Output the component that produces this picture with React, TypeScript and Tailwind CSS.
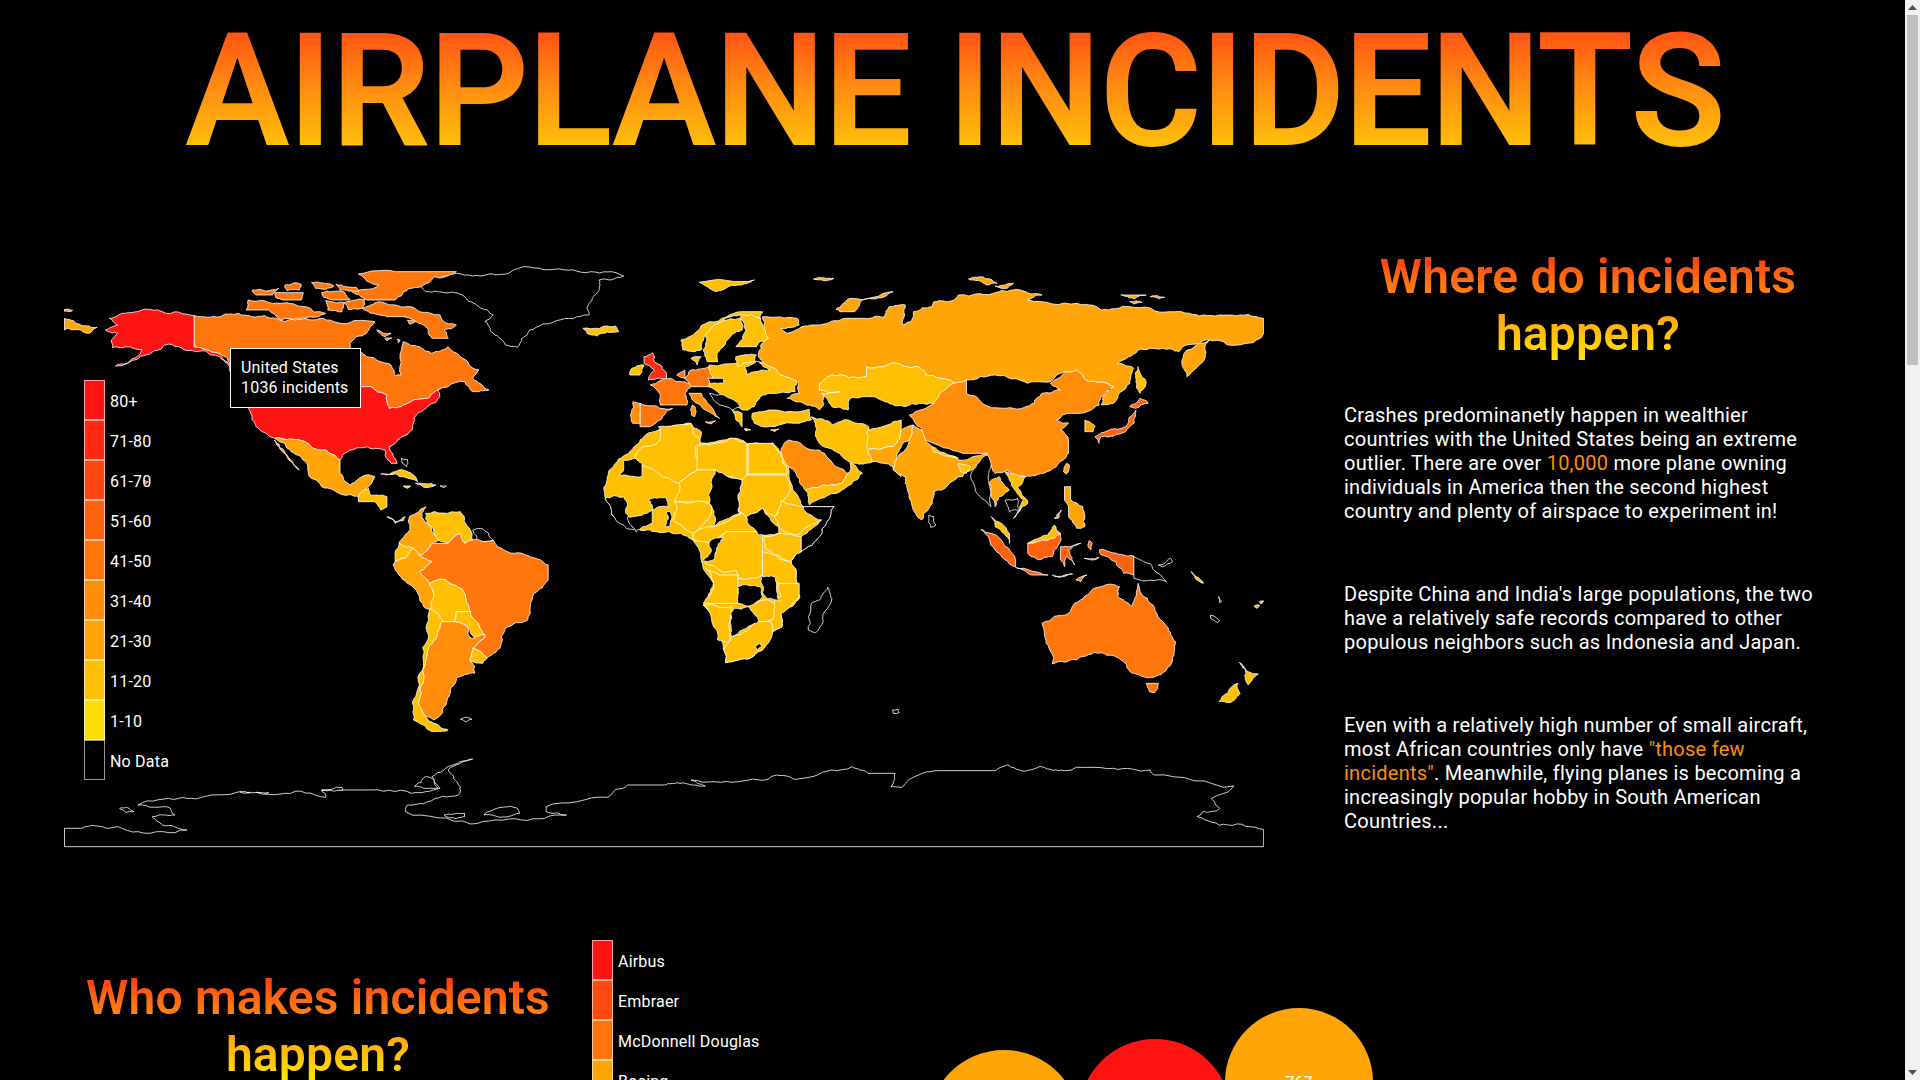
// Airplane incidents dashboard: title, world map with legend, text column, makers section

import React from 'react';

interface Shape {
  c: string;
  d: string;
}

const C80 = '#ff1414';
const C70 = '#ff2a12';
const C60 = '#ff4510';
const C50 = '#ff610e';
const C40 = '#ff770c';
const C30 = '#ff8d0a';
const C20 = '#ffa508';
const C10 = '#ffc004';
const NONE = '#000000';

// traced with x scaled 2.45 and y scaled 3, origin 40,250
const westShapes: Shape[] = [
  { c: C80, d: '170,205 200,190 250,180 300,185 378,197 378,290 400,297 440,310 470,345 470,370 440,320 400,302 340,290 305,285 290,300 260,315 215,340 185,348 240,318 250,300 210,290 178,293 175,270 190,250 160,240 190,225' },
  { c: C20, d: '60,205 100,225 140,232 120,250 100,240 70,235 60,240' },
  { c: C20, d: '60,178 80,181 70,185 60,184' },
  { c: C40, d: '378,197 440,200 485,190 520,200 580,205 600,215 650,205 720,215 800,212 820,215 800,250 760,280 760,295 800,320 860,345 870,378 885,375 890,275 930,290 960,310 1000,290 1030,320 1075,360 1060,385 1100,420 1060,425 1040,395 1000,410 975,420 950,445 890,465 855,475 850,435 810,410 480,410 465,340 440,310 400,297 378,290' },
  { c: C40, d: '790,175 830,155 870,165 930,185 980,195 985,210 1020,225 990,240 1000,265 960,265 940,225 890,200 850,200 810,190' },
  { c: C40, d: '780,72 870,65 1020,65 950,100 890,125 870,150 800,150 760,120 830,105' },
  { c: C40, d: '510,150 590,160 650,170 700,190 650,205 590,210 560,180 505,180' },
  { c: C40, d: '520,120 585,115 570,135 530,135' },
  { c: C40, d: '600,105 640,103 635,120 605,122' },
  { c: C40, d: '665,98 720,108 700,118 675,115' },
  { c: C40, d: '690,128 745,125 760,150 720,150 695,142' },
  { c: C40, d: '725,103 775,112 780,125 735,122' },
  { c: C40, d: '575,128 645,128 640,150 600,150 580,145' },
  { c: C40, d: '700,152 745,158 740,185 705,180' },
  { c: C40, d: '745,158 795,148 790,175 755,178' },
  { c: C40, d: '900,210 920,215 905,222' },
  { c: C40, d: '825,240 860,250 845,260' },
  { c: C40, d: '845,264 862,264 850,272' },
  { c: C40, d: '875,268 882,270 878,278' },
  { c: C80, d: '480,410 810,410 850,435 855,475 890,465 950,445 975,420 980,440 950,470 925,490 915,520 905,545 870,580 855,590 875,640 860,640 845,600 800,590 760,600 735,630 700,600 680,600 650,575 575,565 545,545 520,510 510,470' },
  { c: C20, d: '575,565 650,575 680,600 700,600 735,630 735,670 760,705 800,675 820,680 805,710 780,740 745,735 690,710 660,680 640,620 600,580' },
  { c: C20, d: '575,570 590,600 635,660 610,630 580,585' },
  { c: C10, d: '780,740 805,715 810,735 850,740 850,770 835,780 820,755 780,755' },
  { c: C10, d: '850,800 870,815 895,800 890,812 870,820' },
  { c: C10, d: '835,672 880,660 920,680 925,695 890,680 850,672' },
  { c: C10, d: '920,700 970,705 940,712' },
  { c: C10, d: '890,708 908,708 900,715' },
  { c: NONE, d: '885,625 900,628 898,650 888,640' },
  { c: NONE, d: '980,708 995,708 990,713' },
  { c: NONE, d: '935,110 965,80 1020,70 1100,72 1160,60 1260,58 1350,65 1430,78 1370,90 1365,130 1340,175 1345,195 1265,212 1200,240 1180,265 1170,292 1140,285 1105,245 1090,215 1110,195 1075,170 1040,140 990,128 945,125' },
  { c: C10, d: '1330,235 1410,228 1418,245 1365,258 1340,250' },
  { c: C20, d: '945,770 935,790 950,820 980,870 960,880 930,915 880,880 900,850 905,800' },
  { c: C10, d: '945,790 1030,785 1040,815 1060,870 1040,880 1030,850 1000,880 975,870 950,820' },
  { c: NONE, d: '1060,840 1080,835 1110,870 1090,875 1070,870' },
  { c: C10, d: '880,880 915,895 895,925 870,935 870,905' },
  { c: C20, d: '870,935 895,925 915,895 960,935 930,965 960,1000 965,1030 960,1080 940,1070 900,1000 865,945' },
  { c: C40, d: '960,880 1000,880 1030,850 1040,880 1060,870 1090,875 1110,870 1120,890 1190,915 1245,945 1245,990 1210,1030 1195,1110 1140,1135 1130,1180 1095,1225 1060,1195 1090,1155 1070,1115 1055,1085 1040,1030 995,990 955,1000 930,965 960,935 930,915' },
  { c: C10, d: '995,990 1040,1030 1055,1085 1020,1085 1015,1115 985,1115 960,1075 965,1030 955,1000' },
  { c: C10, d: '1020,1085 1055,1085 1070,1115 1090,1155 1065,1165 1050,1135 1015,1115' },
  { c: C10, d: '1060,1195 1095,1225 1085,1240 1055,1235' },
  { c: C30, d: '985,1115 1015,1115 1050,1135 1055,1165 1090,1155 1060,1195 1055,1235 1065,1270 1020,1285 1005,1320 990,1370 965,1410 945,1400 930,1370 940,1290 960,1180' },
  { c: C10, d: '955,1075 985,1115 960,1180 940,1290 930,1370 945,1400 965,1420 1000,1440 960,1445 915,1410 912,1360 930,1270 950,1170' },
  { c: NONE, d: '1030,1408 1045,1402 1058,1408 1045,1415' },
  { c: C80, d: '255,690 265,695 258,702' },
];

// traced with x scaled 2.45 and y scaled 3, origin 640,250
const eastShapes: Shape[] = [
  // continent and east europe fills, the countries draw on top
  { c: C10, d: '50,535 125,520 150,545 145,580 220,565 262,582 325,578 345,610 370,700 400,770 475,770 440,860 395,905 370,935 385,1000 392,1040 345,1090 348,1130 320,1150 300,1200 270,1225 210,1238 205,1200 155,1065 180,1000 135,880 130,870 100,850 40,845 0,840 -30,820 -70,790 -85,745 -80,680 -60,640 -20,600 0,570' },
  { c: C10, d: '170,345 320,340 340,370 385,395 380,425 320,430 295,440 280,470 250,480 225,460 195,430 165,410' },
  { c: C20, d: '290,320 305,270 300,200 385,205 390,225 345,235 360,250 420,225 440,225 500,205 550,205 600,200 610,170 650,165 645,225 665,215 670,185 715,170 720,155 770,150 780,135 880,125 920,118 985,135 950,150 1070,160 1105,165 1130,180 1200,170 1300,185 1370,198 1450,195 1528,205 1528,245 1520,265 1440,285 1395,270 1340,285 1320,305 1280,295 1220,300 1170,340 1210,355 1200,400 1160,460 1130,465 1135,440 1160,410 1100,395 1070,360 1040,365 1005,395 950,400 870,375 800,390 770,400 700,375 680,350 630,340 555,350 555,380 470,375 440,400 440,420 490,425 450,440 440,480 400,460 360,445 390,430 385,395 340,370 310,345' },
  { c: C20, d: '1395,270 1385,320 1340,380 1328,330 1340,300' },
  { c: C10, d: '1220,350 1240,400 1225,430 1215,395' },
  { c: C20, d: '480,178 520,145 620,125 545,150 525,185 490,185' },
  { c: C10, d: '145,97 280,90 240,105 185,125 165,110' },
  { c: C20, d: '425,87 475,85 450,92' },
  { c: C20, d: '805,87 840,80 875,100 850,105' },
  { c: C20, d: '870,108 915,100 900,115' },
  { c: C20, d: '1178,135 1240,135 1210,147' },
  { c: C20, d: '1250,140 1285,142 1270,146' },
  { c: C20, d: '1200,155 1230,157 1210,162' },
  { c: C10, d: '440,400 470,375 555,380 555,350 630,340 680,350 700,375 770,400 740,425 720,460 650,470 600,455 550,440 515,445 510,480 470,470 445,430 490,425 440,420' },
  { c: C30, d: '770,400 800,390 800,430 845,465 915,475 965,460 985,430 1030,420 1005,400 1040,365 1070,360 1100,395 1160,410 1130,440 1125,465 1080,490 1050,490 1020,510 1050,520 1030,540 1050,570 1050,610 1020,650 985,670 945,680 900,660 870,670 850,610 790,610 700,570 690,535 660,495 720,460 740,425' },
  { c: C30, d: '365,570 440,600 480,650 510,670 495,700 450,705 405,720 385,680 345,605' },
  { c: C10, d: '405,720 450,705 495,700 510,670 515,640 545,670 520,700 490,725 415,765' },
  { c: C10, d: '420,500 470,525 510,510 560,530 555,590 570,635 525,640 490,610 450,590 430,545' },
  { c: C10, d: '275,490 320,480 415,478 420,510 380,520 300,530 280,520' },
  { c: C10, d: '555,545 620,515 640,510 640,540 620,590 560,600' },
  { c: C20, d: '560,600 620,590 640,540 670,525 660,570 630,610 640,680 620,650 570,635' },
  { c: C20, d: '670,525 690,540 700,570 720,600 780,630 850,610 840,630 790,680 780,680 720,725 710,770 690,810 655,720 650,680 620,660 660,570' },
  { c: C10, d: '715,590 780,625 720,605' },
  { c: C10, d: '780,640 810,650 800,670 785,665' },
  { c: NONE, d: '810,680 850,615 860,640 855,700 860,770 830,735' },
  { c: C20, d: '855,700 880,680 905,720 880,740 870,770 860,740' },
  { c: C10, d: '895,665 945,680 925,710 950,760 915,805 940,750 905,690' },
  { c: NONE, d: '895,750 925,745 930,780 905,785' },
  { c: C10, d: '860,800 905,850 905,880 870,830' },
  { c: C50, d: '835,838 860,850 920,930 920,950 870,900' },
  { c: C50, d: '920,952 1000,975 960,975' },
  { c: C50, d: '950,880 1000,870 1020,850 1030,850 1010,920 975,930 950,910' },
  { c: C10, d: '950,880 1000,855 1015,825 1030,850 1000,870' },
  { c: C50, d: '1030,890 1080,880 1050,900 1065,945 1045,920 1040,950 1030,930' },
  { c: C50, d: '1125,900 1150,905 1210,918 1210,975 1185,970 1165,935 1130,915' },
  { c: C50, d: '1100,872 1108,880 1105,900 1098,890' },
  { c: C40, d: '1010,975 1060,972 1030,982' },
  { c: C40, d: '1068,990 1095,975 1080,995' },
  { c: C40, d: '1088,925 1125,922 1105,930' },
  { c: NONE, d: '1210,918 1250,940 1290,995 1210,985' },
  { c: NONE, d: '1270,945 1300,925 1305,935 1280,950' },
  { c: C20, d: '1040,710 1055,710 1055,750 1085,770 1090,830 1070,835 1050,800 1050,770 1040,750' },
  { c: C20, d: '1015,805 1032,780 1025,805' },
  { c: C50, d: '1115,560 1150,540 1190,530 1215,480 1210,520 1190,545 1130,560 1125,580' },
  { c: C50, d: '1200,470 1225,445 1245,460 1215,475' },
  { c: C20, d: '1090,510 1115,530 1110,545 1090,545' },
  { c: C20, d: '1045,640 1052,645 1045,672 1038,665' },
  { c: NONE, d: '708,795 720,800 725,825 712,832 707,815' },
  { c: C40, d: '125,360 170,350 178,385 165,410 125,410 110,385' },
  { c: C40, d: '25,405 75,385 110,395 125,410 110,430 115,465 50,465 45,425' },
  { c: C40, d: '0,460 80,475 50,510 25,530 0,530' },
  { c: C30, d: '-17,455 0,460 0,520 -18,520' },
  { c: C30, d: '120,430 150,430 195,505 175,490 140,460' },
  { c: C30, d: '128,465 135,470 134,500 126,495' },
  { c: C30, d: '160,515 185,512 175,522' },
  { c: C70, d: '10,320 30,308 35,335 65,370 65,385 20,390 35,360 10,340' },
  { c: C10, d: '-20,355 10,345 0,375 -25,375' },
  { c: C10, d: '100,270 170,215 250,185 300,185 295,205 250,195 200,215 160,255 150,300 130,305 105,300' },
  { c: C10, d: '160,255 200,215 245,205 250,240 210,275 190,335 165,335 155,300' },
  { c: C10, d: '250,195 295,205 315,265 285,290 235,290 260,240 245,205' },
  { c: C10, d: '235,320 285,315 280,335 240,350' },
  { c: C10, d: '125,325 150,320 140,345' },
  { c: C10, d: '225,480 250,490 250,530 235,510' },
  { c: C40, d: '90,375 110,360 110,385' },
  { c: C10, d: '255,537 272,540 260,543' },
  { c: C10, d: '320,540 340,537 330,545' },
  // african country lines
  { c: C10, d: '0,595 50,570 45,530 125,520 130,550 150,580 135,590 140,660 95,700 0,640 -12,620' },
  { c: C10, d: '140,590 220,565 262,580 262,690 245,690 185,660 140,660' },
  { c: C10, d: '265,580 325,580 345,610 360,672 265,672' },
  { c: C10, d: '95,700 140,660 185,660 185,720 175,755 130,755 85,755 90,735' },
  { c: C10, d: '85,755 175,760 175,790 130,850 80,810' },
  { c: C10, d: '262,675 358,675 370,720 340,780 330,800 300,775 260,800 240,780 250,690' },
  { c: C10, d: '345,750 400,770 445,810 385,855 340,830 330,800 340,780' },
  { c: C10, d: '130,850 180,830 250,790 290,845 210,850 185,875 130,870' },
  { c: C10, d: '190,880 210,845 300,845 300,910 300,950 300,975 240,985 235,960 200,965 160,940' },
  { c: C10, d: '340,850 395,860 395,905 370,935 310,900 305,860' },
  { c: C10, d: '300,905 370,935 385,1000 345,1005 300,975' },
  { c: C10, d: '160,955 195,975 240,975 240,1060 155,1060 180,1000' },
  { c: C10, d: '155,1065 225,1070 222,1150 218,1180 190,1170' },
  { c: C10, d: '340,1000 390,1000 390,1040 345,1090 348,1130 320,1150 315,1115 330,1050 345,1040' },
  { c: C10, d: '265,1070 305,1050 328,1060 325,1110 290,1115' },
  { c: C10, d: '225,1160 265,1140 290,1115 320,1115 325,1150 300,1200 270,1225 210,1238 205,1200 220,1175' },
  // no data countries over the fills
  { c: NONE, d: '400,770 475,770 440,860 395,905 395,860 445,810 410,790' },
  { c: NONE, d: '185,660 250,690 240,780 245,790 180,830 170,760' },
  { c: NONE, d: '260,800 300,775 340,830 340,850 290,855' },
  { c: NONE, d: '-85,745 -40,740 -30,765 -35,790 -10,840 -50,820 -70,790' },
  { c: NONE, d: '-40,630 -10,625 5,640 5,680 -50,678 -40,660' },
  { c: NONE, d: '15,790 30,780 30,820 -10,845 -30,800' },
  { c: NONE, d: '20,750 65,745 70,770 30,780' },
  { c: NONE, d: '65,785 75,785 72,830 62,830' },
  { c: NONE, d: '170,875 205,860 190,890 180,930 150,935 175,900' },
  { c: NONE, d: '238,1010 250,1005 295,1010 300,1040 260,1068 240,1060' },
  { c: NONE, d: '295,978 330,980 335,1025 345,1055 310,1045 300,1005' },
  { c: NONE, d: '232,1075 265,1070 290,1115 250,1140 225,1160 222,1110' },
  { c: NONE, d: '282,1190 295,1180 298,1190 288,1200' },
  { c: NONE, d: '255,350 285,333 320,360 260,375' },
  { c: NONE, d: '165,385 205,385 205,400 170,402' },
  { c: NONE, d: '170,430 205,435 245,470 225,480 190,460' },
  { c: C40, d: '1065,1060 1100,1030 1140,1005 1175,1010 1170,1040 1205,1070 1220,1000 1250,1060 1285,1120 1312,1175 1305,1230 1280,1270 1250,1282 1210,1270 1185,1235 1130,1208 1070,1230 1010,1242 995,1180 985,1120 1050,1090' },
  { c: C40, d: '1240,1300 1270,1300 1260,1328 1248,1325' },
  { c: C10, d: '1468,1237 1490,1265 1515,1272 1490,1305 1485,1270' },
  { c: C10, d: '1465,1300 1470,1330 1445,1358 1418,1355 1440,1330' },
  { c: NONE, d: '460,1012 470,1045 445,1125 430,1148 412,1140 420,1060 440,1050' },
  { c: NONE, d: '618,1380 632,1378 635,1388 620,1390' },
  { c: NONE, d: '1398,1095 1420,1112 1415,1118 1398,1105' },
  { c: NONE, d: '1418,1040 1425,1055 1420,1058' },
  { c: C10, d: '1505,1068 1518,1065 1512,1075' },
  { c: C10, d: '1518,1055 1528,1053 1522,1062' },
  { c: C10, d: '1350,965 1370,985 1380,1000 1360,985' },
];

// traced with x scaled 2.45 and y scaled 3, origin 40,560
const antarcticaShapes: Shape[] = [
  { c: NONE, d: '60,860 60,805 100,805 140,798 240,815 360,810 300,795 275,770 330,765 320,745 240,735 340,715 420,705 600,700 700,712 690,690 800,690 910,700 980,685 960,650 1000,620 1060,597 1000,630 1030,680 1025,705 950,725 900,735 895,755 1055,792 1180,780 1290,765 1240,755 1240,740 1390,712 1440,675 1530,675 1568,670 1630,678 1595,660 1710,665 1805,645 1850,658 1940,630 1990,620 2030,640 2095,640 2085,680 2110,683 2130,658 2200,632 2340,632 2370,615 2400,630 2455,620 2510,632 2630,625 2720,630 2730,645 2925,678 2870,715 2890,745 2850,755 2835,770 2910,795 2998,808 2998,860' },
  { c: NONE, d: '195,745 215,743 230,755 210,757' },
  { c: NONE, d: '690,690 740,682 742,690 700,692' },
  { c: NONE, d: '490,695 515,697 500,700' },
  { c: NONE, d: '530,697 560,698 545,703' },
  { c: NONE, d: '918,680 945,650 965,660 975,685 940,685' },
  { c: NONE, d: '990,765 1040,760 1040,770 1000,772' },
  { c: NONE, d: '1088,765 1130,742 1170,745 1175,760 1120,770' },
];

const incidentLegend = [
  { label: '80+', color: C80 },
  { label: '71-80', color: C70 },
  { label: '61-70', color: C60 },
  { label: '51-60', color: C50 },
  { label: '41-50', color: C40 },
  { label: '31-40', color: C30 },
  { label: '21-30', color: C20 },
  { label: '11-20', color: C10 },
  { label: '1-10', color: '#ffdd00' },
  { label: 'No Data', color: NONE },
];

const makerLegend = [
  { label: 'Airbus', color: C80 },
  { label: 'Embraer', color: '#ff4a10' },
  { label: 'McDonnell Douglas', color: C40 },
  { label: 'Boeing', color: C20 },
];

type Pt = [number, number];

const noise = (a: Pt, b: Pt) => {
  const s = Math.sin(a[0] * 12.9898 + a[1] * 78.233 + b[0] * 37.719 + b[1] * 94.673) * 43758.5453;
  return (s - Math.floor(s)) * 2 - 1;
};

// midpoint wiggle, same result from both directions so shared borders stay shared
function split(a: Pt, b: Pt, depth: number): Pt[] {
  const len = Math.hypot(b[0] - a[0], b[1] - a[1]);
  if (depth === 0 || len < 8) return [];
  const [p, q] = a[0] < b[0] || (a[0] === b[0] && a[1] < b[1]) ? [a, b] : [b, a];
  const off = noise(p, q) * Math.min(len * 0.14, 7);
  const m: Pt = [
    (p[0] + q[0]) / 2 - ((q[1] - p[1]) / len) * off,
    (p[1] + q[1]) / 2 + ((q[0] - p[0]) / len) * off,
  ];
  return [...split(a, m, depth - 1), m, ...split(m, b, depth - 1)];
}

function roughen(d: string) {
  const pts = d.split(' ').map((s) => s.split(',').map(Number) as Pt);
  const out: Pt[] = [];
  pts.forEach((a, i) => {
    const b = pts[(i + 1) % pts.length];
    out.push(a);
    if (a[0] !== b[0] && a[1] !== b[1]) out.push(...split(a, b, 3));
  });
  return out.map((p) => p.join(',')).join(' ');
}

function Legend({ items }: { items: { label: string; color: string }[] }) {
  return (
    <div className="flex flex-col">
      {items.map((item) => (
        <div key={item.label} className="flex items-center gap-[5px] h-10">
          <div
            className="w-[21px] h-10 border border-white/60"
            style={{ backgroundColor: item.color }}
          />
          <span className="text-base text-white tracking-[0.2px] pt-[3px]">{item.label}</span>
        </div>
      ))}
    </div>
  );
}

function Shapes({ shapes, x, y }: { shapes: Shape[]; x: number; y: number }) {
  return (
    <g transform={`translate(${x} ${y}) scale(0.40816 0.33333)`}>
      {shapes.map((s, i) => (
        <polygon
          key={i}
          points={roughen(s.d)}
          fill={s.c}
          stroke="#ffffff"
          strokeOpacity={0.8}
          strokeWidth={1}
          vectorEffect="non-scaling-stroke"
        />
      ))}
    </g>
  );
}

function WorldMap() {
  return (
    <div className="relative w-[1200px] h-[600px] shrink-0">
      <svg viewBox="64 260 1200 600" className="w-full h-full block">
        <Shapes shapes={westShapes} x={40} y={250} />
        <Shapes shapes={eastShapes} x={640} y={250} />
        <Shapes shapes={antarcticaShapes} x={40} y={560} />
      </svg>
      <div className="absolute left-5 top-[120px]">
        <Legend items={incidentLegend} />
      </div>
      <div className="absolute left-[166px] top-[88px] w-[131px] h-[60px] bg-black border border-white px-[10px] py-[9px] text-base leading-[20px] tracking-[0.2px] text-white">
        <div>United States</div>
        <div>1036 incidents</div>
      </div>
    </div>
  );
}

function ScrollBar() {
  return (
    <div className="w-[15px] shrink-0 flex flex-col bg-[#f1f1f1]">
      <svg width="15" height="15" viewBox="0 0 15 15" className="block shrink-0">
        <polygon points="7.5,5 12,10 3,10" fill="#505050" />
      </svg>
      <div className="h-[350px] mx-[2px] bg-[#c1c1c1]" />
      <div className="flex-1" />
      <svg width="15" height="15" viewBox="0 0 15 15" className="block shrink-0">
        <polygon points="3,5 12,5 7.5,10" fill="#505050" />
      </svg>
    </div>
  );
}

export default function App() {
  return (
    <div className="h-screen flex overflow-hidden bg-black text-white font-['Roboto',sans-serif]">
      <main className="flex-1 min-w-0 overflow-y-auto">
        <div className="h-[3240px]">
          {/* Title */}
          <h1 className="h-[186px] pl-1 text-center text-[157px] leading-[182px] font-semibold tracking-[-2px] bg-linear-to-b from-[#ff1414] to-[#ffe000] bg-clip-text text-transparent">
            AIRPLANE INCIDENTS
          </h1>

          {/* Where */}
          <section className="flex pl-16 mt-[60px]">
            <div className="mt-[14px]">
              <WorldMap />
            </div>
            <div className="ml-20 w-[488px] pt-[2px]">
              <h2 className="text-center text-5xl leading-[57px] font-semibold tracking-[0.2px] bg-linear-to-b from-[#ff1414] to-[#ffe800] bg-clip-text text-transparent">
                Where do incidents happen?
              </h2>
              <div className="pr-3 tracking-[0.25px] text-xl leading-6">
                <p className="mt-[41px]">
                  Crashes predominanetly happen in wealthier countries with the United States being an extreme outlier. There are over <span className="text-[#ff8d0a]">10,000</span> more plane owning individuals in America then the second highest country and plenty of airspace to experiment in!
                </p>
                <p className="mt-[59px]">
                  Despite China and India's large populations, the two have a relatively safe records compared to other populous neighbors such as Indonesia and Japan.
                </p>
                <p className="mt-[59px]">
                  Even with a relatively high number of small aircraft, most African countries only have <span className="text-[#ff8d0a]">"those few incidents"</span>. Meanwhile, flying planes is becoming a increasingly popular hobby in South American Countries...
                </p>
              </div>
            </div>
          </section>

          {/* Who */}
          <section className="flex pl-16 mt-[80px]">
            <div className="w-[508px] pt-[29px]">
              <h2 className="text-center text-5xl leading-[57px] font-semibold tracking-[0.2px] bg-linear-to-b from-[#ff1414] to-[#ffe800] bg-clip-text text-transparent">
                Who makes incidents happen?
              </h2>
            </div>
            <div className="ml-5 w-[328px]">
              <Legend items={makerLegend} />
            </div>
            <svg width="500" height="400" viewBox="0 0 500 400" className="block">
              <circle cx="84" cy="186" r="76" fill={C20} />
              <circle cx="235" cy="175" r="76" fill={C80} />
              <circle cx="379" cy="142" r="74" fill={C20} />
              <text x="379" y="148" textAnchor="middle" fill="#ffffff" fontSize="16">767</text>
            </svg>
          </section>
        </div>
      </main>
      <ScrollBar />
    </div>
  );
}
